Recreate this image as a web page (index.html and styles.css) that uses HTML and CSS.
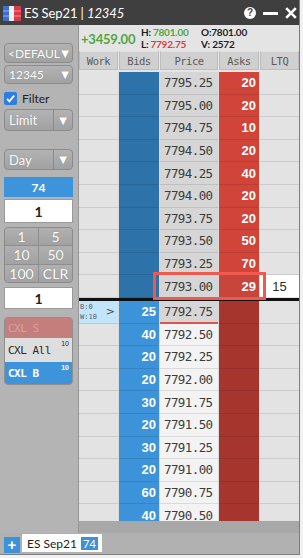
FILE: index.html
```html
<!DOCTYPE html>
<html>
<head>
<meta charset="utf-8">
<link rel="stylesheet" href="styles.css">
</head>
<body>
<div class="win">
  <div class="titlebar">
    <svg class="flag" width="18" height="15" viewBox="0 0 18 15">
      <rect x="0" y="0" width="6" height="15" fill="#3b6fd3"/>
      <rect x="6" y="0" width="5" height="15" fill="#eceef4"/>
      <rect x="11" y="0" width="7" height="15" fill="#db3a48"/>
      <rect x="0" y="4.5" width="18" height="1" fill="#ffffff" opacity="0.45"/>
      <rect x="0" y="9.5" width="18" height="1" fill="#ffffff" opacity="0.45"/>
    </svg>
    <span class="title">ES Sep21 | <i>12345</i></span>
    <div class="tb-icons">
      <span class="help">?</span>
      <span class="minbar"></span>
      <svg class="close" width="12" height="12" viewBox="0 0 12 12">
        <path d="M1.2 1.2 L10.8 10.8 M10.8 1.2 L1.2 10.8" stroke="#fff" stroke-width="2.6" stroke-linecap="butt"/>
      </svg>
    </div>
  </div>

  <div class="main">
    <aside class="side">
      <div class="btn dd"><span>&lt;DEFAUL</span><span class="tri">&#9660;</span></div>
      <div class="btn dd acct"><span>12345</span><span class="tri">&#9660;</span></div>
      <label class="filter"><span class="chk"><svg width="11" height="11" viewBox="0 0 11 11"><path d="M2 5.8 L4.4 8.3 L9.2 2.5" fill="none" stroke="#fff" stroke-width="1.9"/></svg></span>Filter</label>
      <div class="btn split limit"><span class="lbl">Limit</span><span class="arr">&#9660;</span></div>
      <div class="btn split day"><span class="lbl">Day</span><span class="arr">&#9660;</span></div>
      <div class="pos">74</div>
      <div class="qty">1</div>
      <div class="pad">
        <span>1</span><span>5</span>
        <span>10</span><span>50</span>
        <span>100</span><span>CLR</span>
      </div>
      <div class="qty qty2">1</div>
      <div class="cxl">
        <div class="cx cxs">CXL S</div>
        <div class="cx cxa"><span>CXL All</span><sup>10</sup></div>
        <div class="cx cxb"><span>CXL B</span><sup>10</sup></div>
      </div>
    </aside>

    <section class="ladder">
      <div class="info">
        <div class="chg">+3459.00</div>
        <div class="stats">
          <div>H:<span class="g">7801.00</span></div>
          <div>L:<span class="rd">7792.75</span></div>
        </div>
        <div class="stats">
          <div>O:7801.00</div>
          <div>V: 2572</div>
        </div>
      </div>
      <div class="hdr">
        <span>Work</span><span>Bids</span><span>Price</span><span>Asks</span><span>LTQ</span>
      </div>
      <div class="rows">
        <div class="r up"><span class="w"></span><span class="b"></span><span class="p">7795.25</span><span class="a">20</span><span class="l"></span></div>
        <div class="r up"><span class="w"></span><span class="b"></span><span class="p">7795.00</span><span class="a">20</span><span class="l"></span></div>
        <div class="r up"><span class="w"></span><span class="b"></span><span class="p">7794.75</span><span class="a">10</span><span class="l"></span></div>
        <div class="r up"><span class="w"></span><span class="b"></span><span class="p">7794.50</span><span class="a">20</span><span class="l"></span></div>
        <div class="r up"><span class="w"></span><span class="b"></span><span class="p">7794.25</span><span class="a">40</span><span class="l"></span></div>
        <div class="r up"><span class="w"></span><span class="b"></span><span class="p">7794.00</span><span class="a">20</span><span class="l"></span></div>
        <div class="r up"><span class="w"></span><span class="b"></span><span class="p">7793.75</span><span class="a">20</span><span class="l"></span></div>
        <div class="r up"><span class="w"></span><span class="b"></span><span class="p">7793.50</span><span class="a">50</span><span class="l"></span></div>
        <div class="r up"><span class="w"></span><span class="b"></span><span class="p">7793.25</span><span class="a">70</span><span class="l"></span></div>
        <div class="r up last"><span class="w"></span><span class="b"></span><span class="p">7793.00</span><span class="a best">29</span><span class="l ltq">15</span><span class="hlbox"></span></div>
        <div class="mid"></div>
        <div class="r dn first"><span class="w work"><span class="wt"><span>B:0</span><span>W:10</span></span><span class="chev">&gt;</span></span><span class="b">25</span><span class="p uline">7792.75</span><span class="a"></span><span class="l"></span></div>
        <div class="r dn"><span class="w"></span><span class="b">40</span><span class="p">7792.50</span><span class="a"></span><span class="l"></span></div>
        <div class="r dn"><span class="w"></span><span class="b">20</span><span class="p">7792.25</span><span class="a"></span><span class="l"></span></div>
        <div class="r dn"><span class="w"></span><span class="b">20</span><span class="p">7792.00</span><span class="a"></span><span class="l"></span></div>
        <div class="r dn"><span class="w"></span><span class="b">30</span><span class="p">7791.75</span><span class="a"></span><span class="l"></span></div>
        <div class="r dn"><span class="w"></span><span class="b">20</span><span class="p">7791.50</span><span class="a"></span><span class="l"></span></div>
        <div class="r dn"><span class="w"></span><span class="b">30</span><span class="p">7791.25</span><span class="a"></span><span class="l"></span></div>
        <div class="r dn"><span class="w"></span><span class="b">20</span><span class="p">7791.00</span><span class="a"></span><span class="l"></span></div>
        <div class="r dn"><span class="w"></span><span class="b">60</span><span class="p">7790.75</span><span class="a"></span><span class="l"></span></div>
        <div class="r dn"><span class="w"></span><span class="b">40</span><span class="p">7790.50</span><span class="a"></span><span class="l"></span></div>
      </div>
      <div class="hscroll"></div>
    </section>
  </div>

  <div class="footer">
    <span class="plus">+</span>
    <span class="tab">ES Sep21 <span class="badge">74</span></span>
  </div>
</div>
</body>
</html>
```

FILE: styles.css
```css
* { box-sizing: border-box; }
html, body { margin: 0; padding: 0; }
body {
  background: #f1f1f1;
  font-family: Lato, "Liberation Sans", sans-serif;
  width: 303px;
  height: 558px;
  overflow: hidden;
}
.win {
  width: 300px;
  height: 555px;
  display: flex;
  flex-direction: column;
  background: #b4b4b4;
  border-right: 1px solid #7d7d7d;
  border-bottom: 1px solid #7d7d7d;
  overflow: hidden;
}

/* title bar */
.titlebar {
  height: 25px;
  flex: none;
  background: #3f3f3f;
  display: flex;
  align-items: center;
  padding: 0 1px 0 3px;
  color: #fff;
}
.flag { flex: none; margin-right: 3px; margin-top: 1px; }
.title { font-size: 13px; letter-spacing: -0.1px; }
.title i { font-style: italic; }
.tb-icons {
  margin-left: auto;
  display: flex;
  align-items: center;
}
.help {
  width: 12px; height: 12px;
  border-radius: 50%;
  background: #fff;
  color: #3f3f3f;
  font: bold 10px/12px "Liberation Sans", sans-serif;
  text-align: center;
}
.minbar {
  width: 15px; height: 3px;
  background: #fff;
  margin-left: 7px;
  margin-top: 1px;
}
.close { margin-left: 7px; margin-right: 1px; }

/* main */
.main { flex: 1; display: flex; min-height: 0; }

.side {
  width: 79px;
  flex: none;
  background: #b4b4b4;
  border-right: 1px solid #979797;
  padding: 18px 5px 0 4px;
  display: flex;
  flex-direction: column;
}
.btn {
  background: linear-gradient(#b3b3b3, #a1a1a1);
  border: 1px solid #8b8b8b;
  border-radius: 4px;
  color: #fff;
  font-size: 12px;
  text-shadow: 0 0 1px rgba(0,0,0,0.25);
  display: flex;
  align-items: center;
}
.dd { height: 20px; padding: 0 3px 0 3px; justify-content: space-between; }
.acct { margin-top: 2px; height: 19px; padding-left: 4px; }
.tri { font-size: 10px; font-family: "DejaVu Sans", sans-serif; }
.filter {
  margin-top: 8px;
  height: 13px;
  display: flex;
  align-items: center;
  font-size: 12px;
  color: #1e1e1e;
}
.chk {
  width: 13px; height: 13px;
  background: #2e7ee0;
  border-radius: 2px;
  display: flex;
  align-items: center;
  justify-content: center;
  margin-right: 5px;
}
.split { height: 22px; }
.limit { margin-top: 4px; }
.day { margin-top: 18px; height: 21px; }
.split .lbl { flex: 1; padding-left: 4px; font-size: 13px; }
.split .arr {
  width: 19px;
  height: 100%;
  border-left: 1px solid #8b8b8b;
  font-size: 10px;
  font-family: "DejaVu Sans", sans-serif;
  display: flex;
  align-items: center;
  justify-content: center;
}
.pos {
  margin-top: 7px;
  height: 20px;
  background: #3e94da;
  color: #fff;
  font-weight: bold;
  font-size: 12px;
  display: flex;
  align-items: center;
  justify-content: center;
}
.qty {
  margin-top: 2px;
  height: 24px;
  background: #fff;
  border: 1px solid #9a9a9a;
  color: #222;
  font-weight: bold;
  font-size: 14px;
  display: flex;
  align-items: center;
  justify-content: center;
}
.qty2 { margin-top: 4px; height: 22px; }
.pad {
  margin-top: 4px;
  height: 56px;
  display: grid;
  grid-template-columns: 1fr 1fr;
  grid-template-rows: repeat(3, 1fr);
  border: 1px solid #8b8b8b;
  border-radius: 4px;
  overflow: hidden;
  background: #8e8e8e;
  gap: 1px;
}
.pad span {
  background: linear-gradient(#b0b0b0, #a2a2a2);
  color: #fff;
  font-size: 14px;
  text-shadow: 0 0 1px rgba(0,0,0,0.3);
  display: flex;
  align-items: center;
  justify-content: center;
}
.cxl {
  margin-top: 8px;
  border: 1px solid #8f8f8f;
  border-radius: 4px;
  overflow: hidden;
  display: flex;
  flex-direction: column;
  font-family: "DejaVu Sans Mono", monospace;
  font-size: 11px;
  letter-spacing: -0.5px;
}
.cx { display: flex; align-items: center; padding: 0 3px 0 3px; }
.cx sup {
  margin-left: auto;
  align-self: flex-start;
  font-family: "Liberation Sans", sans-serif;
  font-size: 7px;
  letter-spacing: 0;
  margin-top: 2px;
  vertical-align: baseline;
}
.cxs { height: 20px; background: #c47e7c; color: #d9a09e; }
.cxa { height: 24px; background: #dedede; color: #2b2b2b; }
.cxb { height: 22px; background: #3e94da; color: #fff; font-weight: bold; }

/* ladder */
.ladder {
  flex: 1;
  min-width: 0;
  display: flex;
  flex-direction: column;
  background: #e4e4e4;
}
.info {
  height: 26px;
  flex: none;
  display: flex;
  align-items: center;
  padding-left: 2px;
}
.chg {
  width: 60px;
  color: #52a641;
  font-weight: bold;
  font-size: 13px;
  letter-spacing: -0.2px;
  margin-top: 1px;
}
.stats {
  width: 60px;
  font-size: 10px;
  font-weight: bold;
  color: #1f1f1f;
  line-height: 12.5px;
  letter-spacing: -0.2px;
}
.stats span { margin-left: 2px; }
.g { color: #4fa63d; }
.rd { color: #d7403a; }

.hdr {
  height: 19px;
  flex: none;
  margin-bottom: 2px;
  display: grid;
  grid-template-columns: 39px 40px 58px 40px 39px;
  column-gap: 1px;
  background: #e8e8e8;
}
.hdr span {
  background: #d0d0d0;
  border: 1px solid #bdbdbd;
  border-top-color: #e2e2e2;
  font-family: "DejaVu Sans Mono", monospace;
  font-size: 10.5px;
  letter-spacing: -0.5px;
  color: #5a5a5a;
  display: flex;
  align-items: center;
  justify-content: center;
}

.rows {
  flex: 1;
  min-height: 0;
  overflow: hidden;
  display: flex;
  flex-direction: column;
}
.r {
  flex: none;
  height: 22.6px;
  display: grid;
  grid-template-columns: 39px 40px 58px 40px 39px;
  column-gap: 1px;
  background: #d9d9d9;
  position: relative;
}
.r > span {
  border-bottom: 1px solid rgba(0,0,0,0.1);
  display: flex;
  align-items: center;
}
.w, .l { background: #e3e3e3; }
.p {
  padding-left: 4px;
  font-family: "DejaVu Sans Mono", monospace;
  font-size: 12.5px;
  letter-spacing: -0.6px;
  color: #3c3c3c;
}
.b, .a {
  justify-content: flex-end;
  padding-right: 3px;
  color: #fff;
  font-family: "Liberation Sans", sans-serif;
  font-weight: bold;
  font-size: 13px;
}
.up .b { background: #2d72a9; }
.up .p { background: #d6d6d6; }
.up .a { background: #d1443a; }
.dn .b { background: #3d93d9; }
.dn .p { background: #f3f3f3; }
.dn .a { background: #a6352e; }
.up .a.best { background: #c7453b; }
.ltq {
  background: #fff !important;
  justify-content: center;
  font-family: "Liberation Sans", sans-serif;
  font-size: 13px;
  color: #2a2a2a;
}
.hlbox {
  position: absolute;
  left: 74px;
  top: -3px;
  width: 113px;
  height: 28px;
  border: 3px solid #ee5a4e !important;
  z-index: 3;
}
.mid { flex: none; height: 3px; background: #111; }
.dn.first .p { background: #d6d6d6; border-bottom: 2px solid #de5649; }
.work {
  background: #c3e5fb !important;
  justify-content: space-between;
  padding: 0 3px 0 1px;
}
.wt {
  display: flex;
  flex-direction: column;
  font-family: "DejaVu Sans Mono", monospace;
  font-size: 7px;
  line-height: 10px;
  color: #55606a;
}
.chev {
  font-family: "DejaVu Sans", sans-serif;
  font-size: 11px;
  color: #4a4a4a;
}
.hscroll { height: 12px; flex: none; background: #a8a8a8; }

/* footer */
.footer {
  height: 21px;
  flex: none;
  background: #b1b1b1;
  display: flex;
  align-items: flex-start;
  padding-left: 4px;
}
.plus {
  width: 16px; height: 16px;
  margin-top: 4px;
  background: #3c92d8;
  color: #fff;
  font: bold 15px/16px "Liberation Sans", sans-serif;
  text-align: center;
}
.tab {
  margin-left: 2px;
  margin-top: 1px;
  height: 18px;
  background: #fff;
  padding: 0 4px 0 5px;
  display: flex;
  align-items: center;
  font-size: 12px;
  color: #222;
  white-space: pre;
}
.badge {
  background: #3c92d8;
  color: #fff;
  font-size: 11px;
  padding: 0 2px;
  height: 13px;
  line-height: 13px;
  margin-left: 1px;
}
```
